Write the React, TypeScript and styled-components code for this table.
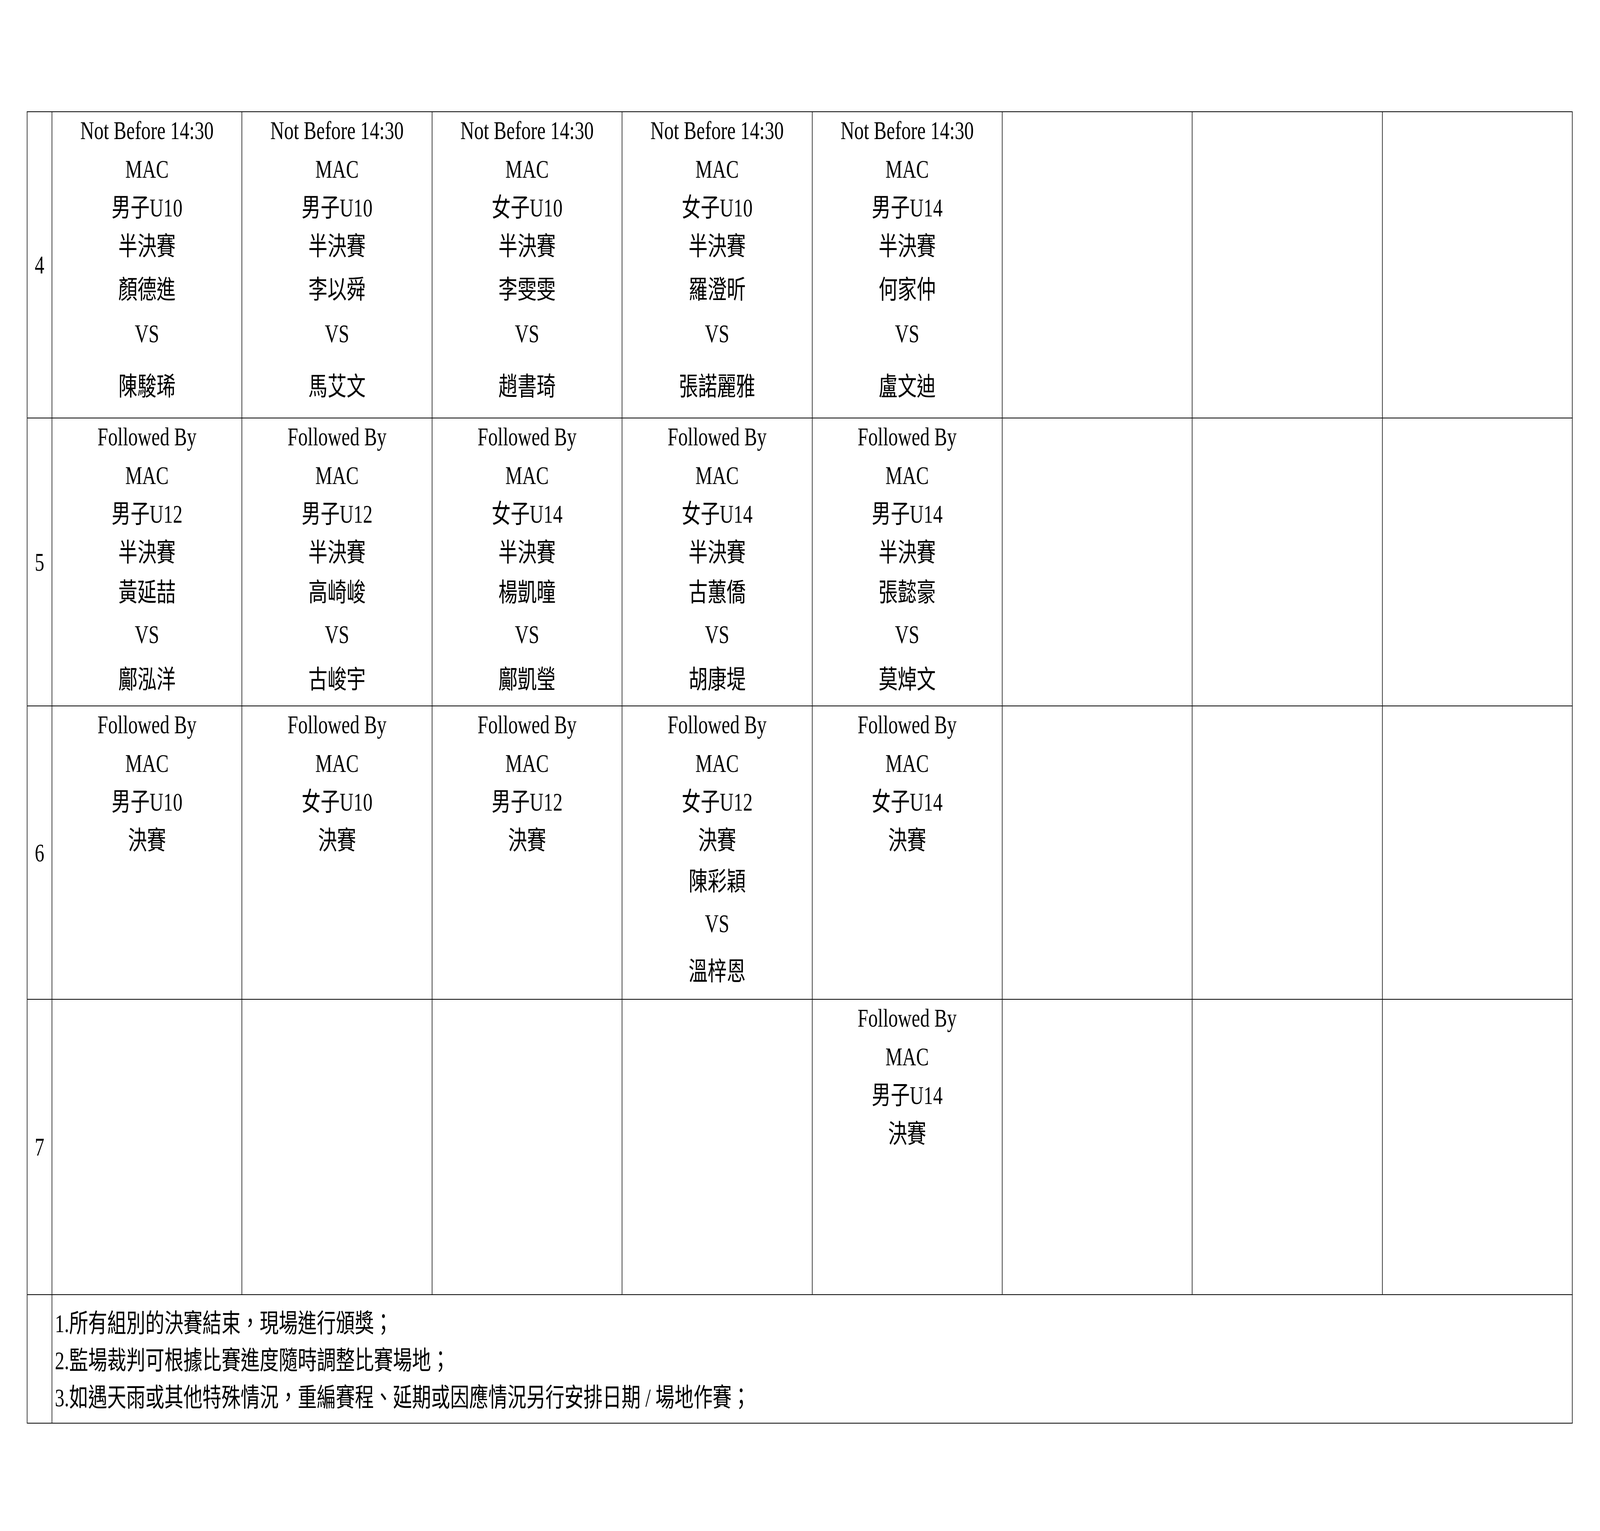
import React from "react"
import styled, { createGlobalStyle } from "styled-components"

// the schedule is laid out on a fixed A4-landscape sheet and fitted to the window
const PAGE_W = 5543
const PAGE_H = 3919

type TMatch = {
  head: string
  group: string
  stage: string
  players?: [string, string]
}

type TSpacing = { name: number; vs: number; rival: number }

type TRow = {
  no: number
  height: number
  spacing: TSpacing
  cells: (TMatch | null)[]
}

const NB = "Not Before 14:30"
const FB = "Followed By"

const rows: TRow[] = [
  {
    no: 4,
    height: 784,
    spacing: { name: 12, vs: 13, rival: 37 },
    cells: [
      { head: NB, group: "男子U10", stage: "半決賽", players: ["顏德進", "陳駿琋"] },
      { head: NB, group: "男子U10", stage: "半決賽", players: ["李以舜", "馬艾文"] },
      { head: NB, group: "女子U10", stage: "半決賽", players: ["李雯雯", "趙書琦"] },
      { head: NB, group: "女子U10", stage: "半決賽", players: ["羅澄昕", "張諾麗雅"] },
      { head: NB, group: "男子U14", stage: "半決賽", players: ["何家仲", "盧文迪"] },
      null,
      null,
      null,
    ],
  },
  {
    no: 5,
    height: 737,
    spacing: { name: 3, vs: 8, rival: 17 },
    cells: [
      { head: FB, group: "男子U12", stage: "半決賽", players: ["黃延喆", "鄺泓洋"] },
      { head: FB, group: "男子U12", stage: "半決賽", players: ["高崎峻", "古峻宇"] },
      { head: FB, group: "女子U14", stage: "半決賽", players: ["楊凱曈", "鄺凱瑩"] },
      { head: FB, group: "女子U14", stage: "半決賽", players: ["古蕙僑", "胡康堤"] },
      { head: FB, group: "男子U14", stage: "半決賽", players: ["張懿豪", "莫焯文"] },
      null,
      null,
      null,
    ],
  },
  {
    no: 6,
    height: 751,
    spacing: { name: 6, vs: 8, rival: 24 },
    cells: [
      { head: FB, group: "男子U10", stage: "決賽" },
      { head: FB, group: "女子U10", stage: "決賽" },
      { head: FB, group: "男子U12", stage: "決賽" },
      { head: FB, group: "女子U12", stage: "決賽", players: ["陳彩穎", "溫梓恩"] },
      { head: FB, group: "女子U14", stage: "決賽" },
      null,
      null,
      null,
    ],
  },
  {
    no: 7,
    height: 756,
    spacing: { name: 6, vs: 8, rival: 24 },
    cells: [
      null,
      null,
      null,
      null,
      { head: FB, group: "男子U14", stage: "決賽" },
      null,
      null,
      null,
    ],
  },
]

const notes = [
  "1.所有組別的決賽結束，現場進行頒獎；",
  "2.監場裁判可根據比賽進度隨時調整比賽場地；",
  "3.如遇天雨或其他特殊情況，重編賽程、延期或因應情況另行安排日期 / 場地作賽；",
]

const NOTE_HEIGHT = 329

const GlobalStyle = createGlobalStyle`
  html, body {
    margin: 0;
    padding: 0;
    background: #fff;
    overflow: hidden;
  }
  body {
    font-family: "Liberation Serif", "Noto Sans CJK TC", serif;
    color: #000;
  }
`

const useFit = () => {
  const read = () => ({ x: window.innerWidth / PAGE_W, y: window.innerHeight / PAGE_H })
  const [fit, setFit] = React.useState(read)
  React.useLayoutEffect(() => {
    const onResize = () => setFit(read())
    onResize()
    window.addEventListener("resize", onResize)
    return () => window.removeEventListener("resize", onResize)
  }, [])
  return fit
}

const App: React.FC = () => {
  const fit = useFit()
  const template = [...rows.map((r) => r.height), NOTE_HEIGHT].map((h) => `${h}px`).join(" ")

  return (
    <Viewport>
      <GlobalStyle />
      <Sheet style={{ transform: `scale(${fit.x}, ${fit.y})` }}>
        <Table $rows={template}>
          {rows.map((row) => (
            <React.Fragment key={row.no}>
              <NumCell>{row.no}</NumCell>
              {row.cells.map((cell, i) => (
                <MatchCell key={i}>
                  {cell && (
                    <>
                      <Line $first>{cell.head}</Line>
                      <Line>MAC</Line>
                      <Line>{cell.group}</Line>
                      <Line>{cell.stage}</Line>
                      {cell.players && (
                        <>
                          <Line $gap={row.spacing.name}>{cell.players[0]}</Line>
                          <Line $gap={row.spacing.vs}>VS</Line>
                          <Line $gap={row.spacing.rival}>{cell.players[1]}</Line>
                        </>
                      )}
                    </>
                  )}
                </MatchCell>
              ))}
            </React.Fragment>
          ))}
          <NumCell />
          <NoteCell>
            {notes.map((n) => (
              <p key={n}>{n}</p>
            ))}
          </NoteCell>
        </Table>
      </Sheet>
    </Viewport>
  )
}

export default App

const Viewport = styled.div`
  width: 100vw;
  height: 100vh;
  overflow: hidden;
  background: #fff;
`

const Sheet = styled.div`
  width: ${PAGE_W}px;
  height: ${PAGE_H}px;
  box-sizing: border-box;
  padding: 285px 0 0 93px;
  transform-origin: 0 0;
  background: #fff;
`

const Table = styled.div<{ $rows: string }>`
  display: grid;
  grid-template-columns: 86px repeat(8, 658.375px);
  grid-template-rows: ${({ $rows }) => $rows};
  width: max-content;
  border-top: 2px solid #000;
  border-left: 2px solid #000;
  font-family: "Liberation Serif", "Noto Sans CJK TC", serif;
  font-size: 66px;
`

const Cell = styled.div`
  box-sizing: border-box;
  border-right: 2px solid #000;
  border-bottom: 2px solid #000;
  min-width: 0;
  overflow: hidden;
`

const NumCell = styled(Cell)`
  display: flex;
  align-items: center;
  justify-content: center;
  line-height: 1;
`

const MatchCell = styled(Cell)`
  display: flex;
  flex-direction: column;
  align-items: center;
  text-align: center;
`

const Line = styled.div<{ $gap?: number; $first?: boolean }>`
  line-height: 99px;
  white-space: nowrap;
  margin-top: ${({ $gap, $first }) => ($first ? -3 : $gap ?? 0)}px;
`

const NoteCell = styled(Cell)`
  grid-column: span 8;
  padding: 25px 0 0 9px;
  > p {
    margin: 0;
    line-height: 95px;
    white-space: nowrap;
  }
`
